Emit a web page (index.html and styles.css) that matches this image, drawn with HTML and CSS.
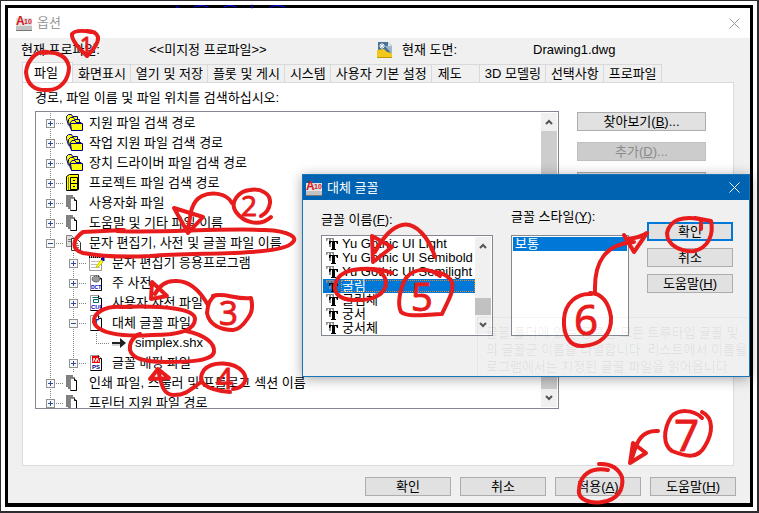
FILE: index.html
```html
<!DOCTYPE html>
<html lang="ko">
<head>
    <meta charset="utf-8">
    <meta name="viewport" content="width=device-width, initial-scale=1">
    <title>옵션</title>
    <link rel="stylesheet" href="styles.css">
</head>
<body>

<!-- Shared icons -->
<svg class="defs" width="0" height="0">
    <symbol id="folders" viewBox="0 0 18 18">
        <g fill="#ff0" stroke="#000080">
            <path d="M2.500 11.500l-2-7V2.500l2-2h3l1 2h5v4"/>
            <path d="M4.500 14.500l-2-7v-2l2-2h3l1 2h5v4"/>
            <path d="M5.500 16.500l-1-6v-2l1.500-2h3l1 2h5v2"/>
            <path d="M4.500 9.500h12v7h-11z"/>
        </g>
    </symbol>
    <symbol id="cabinet" viewBox="0 0 18 18">
        <path d="M.5 2.500l3-2h9v15l-2 1h-10z" fill="#ff0" stroke="#000"/>
        <path d="M4.500 3.500h7v12h-7zM4.500 9.500h7M7 6.500h2M7 12.500h2" fill="#ff0" stroke="#000"/>
        <path d="M2.500 3v13" stroke="#880"/>
    </symbol>
    <symbol id="papers" viewBox="0 0 18 18">
        <path d="M0 1h7v2H2v10H0zM2 3h7v2H4v10H2z" fill="#808080"/>
        <path d="M4.500 4.500h4l2 2v10h-6z" fill="#fff" stroke="#888"/>
        <path d="M8.500 4.500v2h2v10h-6" fill="none" stroke="#000"/>
    </symbol>
    <symbol id="docs" viewBox="0 0 18 18">
        <path d="M.5 1.500h5l2 2v9h-7z" fill="#ddd" stroke="#808080"/>
        <path d="M5.500 4.500h5l4 4v8h-9z" fill="#fff" stroke="#333"/>
        <path d="M7 9.500h5M7 11.500h6M7 13.500h6M2 5.500h3M2 7.500h3" stroke="#777"/>
    </symbol>
    <symbol id="note" viewBox="0 0 18 18">
        <path d="M.5 3.500h12v13h-12z" fill="#fff" stroke="#999"/>
        <path d="M2 7.500h9M2 10.500h8M2 13.500h9" stroke="#bbb"/>
        <path d="M0 2.500h12" stroke="#000" stroke-width="3" stroke-dasharray="1 1"/>
        <path d="M7 13l5-7 2 2-5 5z" fill="#ff0" stroke="#cc0"/>
        <path d="M12 5l3-3v5z" fill="#00c" stroke="#000080"/>
    </symbol>
    <symbol id="page" viewBox="0 0 18 18">
        <path d="M1.500 1.500h8l3 3v12h-11z" fill="#fff" stroke="#999"/>
        <path d="M9.500 1.500v3h3v12h-11" fill="none" stroke="#000"/>
    </symbol>
    <symbol id="truetype" viewBox="0 0 14 14">
        <path d="M1 1h8v3H8L7 2H6v8H4V2H3L2 4H1z" fill="#8a8a8a"/>
        <path d="M4 4h9v3h-1l-1-2h-1v7h1v1H6v-1h1V5H6L5 7H4z" fill="#000"/>
    </symbol>
    <symbol id="up" viewBox="0 0 8 6"><path d="M1 5l3-3 3 3" fill="none" stroke="#555" stroke-width="2"/></symbol>
    <symbol id="down" viewBox="0 0 8 6"><path d="M1 1l3 3 3-3" fill="none" stroke="#555" stroke-width="2"/></symbol>
    <symbol id="close" viewBox="0 0 11 11"><path d="M.5.5l10 10M10.500.5l-10 10" fill="none" stroke="currentColor"/></symbol>
</svg>

<div class="frame">
    <main class="window">
        <header class="titlebar">
            <svg class="app-icon" viewBox="0 0 16 16">
                <path d="M0 3h16v12H0z" fill="#e4e4e4"/>
                <path d="M0 11h16v4H0z" fill="#c2c2c2"/>
                <path d="M0 15.500h16" stroke="#777"/>
                <text x="0" y="10" font-size="12">A</text>
                <text x="8" y="9" font-size="7">10</text>
            </svg>
            <h1>옵션</h1>
            <button class="close" aria-label="닫기"><svg><use href="#close"/></svg></button>
        </header>

        <div class="profile">
            <span>현재 프로파일:</span>
            <span>&lt;&lt;미지정 프로파일&gt;&gt;</span>
            <svg class="drawing-icon" viewBox="0 0 16 18">
                <path d="M1 1h10l4 4v12H1z" fill="#4a7396"/>
                <path d="M8 5h7v8z" fill="#9fb7c9"/>
                <path d="M11 1v4h4z" fill="#dce6ee"/>
                <path d="M5 2v6M2 5h6M3 3l4 4M7 3l-4 4" stroke="#fff"/>
                <path d="M0 9l7-1 3 3 5 1v5H0z" fill="#f3c81c"/>
                <path d="M0 16.500h15" stroke="#c79500"/>
            </svg>
            <span>현재 도면:</span>
            <span>Drawing1.dwg</span>
        </div>

        <nav class="tabs" role="tablist">
            <button class="tab active" role="tab" aria-selected="true">파일</button>
            <button class="tab" role="tab">화면표시</button>
            <button class="tab" role="tab">열기 및 저장</button>
            <button class="tab" role="tab">플롯 및 게시</button>
            <button class="tab" role="tab">시스템</button>
            <button class="tab" role="tab">사용자 기본 설정</button>
            <button class="tab wide" role="tab">제도</button>
            <button class="tab" role="tab">3D 모델링</button>
            <button class="tab" role="tab">선택사항</button>
            <button class="tab" role="tab">프로파일</button>
        </nav>

        <section class="panel" role="tabpanel">
            <p class="caption" id="paths">경로, 파일 이름 및 파일 위치를 검색하십시오:</p>
            <div class="columns">
                <div class="treebox">
                    <ul class="tree" aria-labelledby="paths">
                        <li><div class="row"><button class="toggle plus" aria-label="확장"></button><svg class="icon"><use href="#folders"/></svg>지원 파일 검색 경로</div></li>
                        <li><div class="row"><button class="toggle plus" aria-label="확장"></button><svg class="icon"><use href="#folders"/></svg>작업 지원 파일 검색 경로</div></li>
                        <li><div class="row"><button class="toggle plus" aria-label="확장"></button><svg class="icon"><use href="#folders"/></svg>장치 드라이버 파일 검색 경로</div></li>
                        <li><div class="row"><button class="toggle plus" aria-label="확장"></button><svg class="icon"><use href="#cabinet"/></svg>프로젝트 파일 검색 경로</div></li>
                        <li><div class="row"><button class="toggle plus" aria-label="확장"></button><svg class="icon"><use href="#papers"/></svg>사용자화 파일</div></li>
                        <li><div class="row"><button class="toggle plus" aria-label="확장"></button><svg class="icon"><use href="#papers"/></svg>도움말 및 기타 파일 이름</div></li>
                        <li>
                            <div class="row"><button class="toggle" aria-label="축소"></button><svg class="icon"><use href="#docs"/></svg>문자 편집기, 사전 및 글꼴 파일 이름</div>
                            <ul class="branch">
                                <li><div class="row"><button class="toggle plus" aria-label="확장"></button><svg class="icon"><use href="#note"/></svg>문자 편집기 응용프로그램</div></li>
                                <li><div class="row"><button class="toggle plus" aria-label="확장"></button><svg class="icon" viewBox="0 0 18 18">
                                    <use href="#page"/><ellipse cx="7" cy="5" rx="4" ry="3" fill="#999" stroke="#222" stroke-dasharray="1 1"/>
                                    <text x="2" y="15" font-size="5" font-weight="bold" fill="#00c">DCT</text></svg>주 사전</div></li>
                                <li><div class="row"><button class="toggle plus" aria-label="확장"></button><svg class="icon" viewBox="0 0 18 18">
                                    <use href="#page"/><path d="M3.500 3.500h6M4.500 5.500h5v3h-5z" fill="#fff" stroke="#066"/>
                                    <text x="2" y="15" font-size="6" font-weight="bold" fill="#00c">CUI</text></svg>사용자 사전 파일</div></li>
                                <li>
                                    <div class="row"><button class="toggle" aria-label="축소"></button><svg class="icon" viewBox="0 0 18 18">
                                        <use href="#page"/><text x="4" y="13" font-size="10" font-weight="bold" fill="#22c">T</text></svg>대체 글꼴 파일</div>
                                    <div class="row leaf"><svg class="arrow" viewBox="0 0 15 10"><path d="M0 4h8V0l6 5-6 5V6H0z" fill="#222"/><path d="M0 7h8" stroke="#aaa"/></svg>simplex.shx</div>
                                </li>
                                <li><div class="row"><button class="toggle plus" aria-label="확장"></button><svg class="icon" viewBox="0 0 18 18">
                                    <use href="#page"/><path d="M3 2h6l2 3v4H3z" fill="#e00"/><path d="M4 8l1-4 2 4 1-4 2 4" fill="none" stroke="#fff"/>
                                    <text x="3" y="15" font-size="6" font-weight="bold" fill="#008">PS</text></svg>글꼴 매핑 파일</div></li>
                            </ul>
                        </li>
                        <li><div class="row"><button class="toggle plus" aria-label="확장"></button><svg class="icon"><use href="#papers"/></svg>인쇄 파일, 스풀러 및 프롤로그 섹션 이름</div></li>
                        <li><div class="row"><button class="toggle plus" aria-label="확장"></button><svg class="icon"><use href="#papers"/></svg>프린터 지원 파일 경로</div></li>
                    </ul>
                    <div class="scroll">
                        <svg><use href="#up"/></svg>
                        <div class="thumb long"></div>
                        <svg><use href="#down"/></svg>
                    </div>
                </div>
                <div class="side">
                    <button class="btn">찾아보기(<u>B</u>)...</button>
                    <button class="btn" disabled>추가(<u>D</u>)...</button>
                    <button class="btn" aria-label="제거"></button>
                </div>
            </div>
        </section>

        <footer class="actions">
            <button class="btn">확인</button>
            <button class="btn">취소</button>
            <button class="btn">적용(<u>A</u>)</button>
            <button class="btn">도움말(<u>H</u>)</button>
        </footer>
    </main>
</div>

<div class="dialog" role="dialog" aria-labelledby="dialog-title">
    <header class="dialog-title">
        <svg class="app-icon" viewBox="0 0 16 16">
            <path d="M0 3h16v12H0z" fill="#e4e4e4"/>
            <path d="M0 11h16v4H0z" fill="#c2c2c2"/>
            <path d="M0 15.500h16" stroke="#777"/>
            <text x="0" y="10" font-size="12">A</text>
            <text x="8" y="9" font-size="7">10</text>
        </svg>
        <h2 id="dialog-title">대체 글꼴</h2>
        <button class="close" aria-label="닫기"><svg><use href="#close"/></svg></button>
    </header>
    <div class="dialog-body">
        <div class="field names">
            <span id="font-name">글꼴 이름(<u>F</u>):</span>
            <div class="listbox">
                <ul role="listbox" aria-labelledby="font-name">
                    <li role="option"><svg><use href="#truetype"/></svg><span>Yu Gothic UI Light</span></li>
                    <li role="option"><svg><use href="#truetype"/></svg><span>Yu Gothic UI Semibold</span></li>
                    <li role="option"><svg><use href="#truetype"/></svg><span>Yu Gothic UI Semilight</span></li>
                    <li role="option" class="selected" aria-selected="true"><svg><use href="#truetype"/></svg><span>굴림</span></li>
                    <li role="option"><svg><use href="#truetype"/></svg><span>굴림체</span></li>
                    <li role="option"><svg><use href="#truetype"/></svg><span>궁서</span></li>
                    <li role="option"><svg><use href="#truetype"/></svg><span>궁서체</span></li>
                </ul>
                <div class="scroll">
                    <svg><use href="#up"/></svg>
                    <div class="thumb short"></div>
                    <svg><use href="#down"/></svg>
                </div>
            </div>
        </div>
        <div class="field styles">
            <span id="font-style">글꼴 스타일(<u>Y</u>):</span>
            <div class="listbox">
                <ul role="listbox" aria-labelledby="font-style">
                    <li role="option" class="selected" aria-selected="true">보통</li>
                </ul>
            </div>
        </div>
        <div class="dialog-actions">
            <button class="btn default">확인</button>
            <button class="btn">취소</button>
            <button class="btn">도움말(<u>H</u>)</button>
        </div>
    </div>
    <!-- Tooltip fading out -->
    <div class="tooltip">
        글꼴 폴더에 있는 등록된 모든 트루타입 글꼴 및<br>
        의 글꼴군 이름을 나열합니다. 리스트에서 이름을<br>
        로그램에서는 지정된 글꼴 파일을 읽어옵니다.
    </div>
</div>

<!-- Red pen marks for steps 1 to 7 -->
<svg class="ink" viewBox="0 0 759 513">
    <path class="blue" d="M176 7h3M194 7q7-3 14 0M224 7q6-3 12 0M252 5v3M270 7q7-3 15 0"/>

    <path d="M91 32Q76 29 72 34Q71 41 87 56Q99 44 98 37Q96 31 87 31"/>
    <path d="M48 52C34 50 27 63 26 72C27 85 35 91 48 90C61 90 69 79 69 67C67 56 57 51 43 53"/>

    <path d="M271 217C260 227 244 223 236 212C229 202 239 191 250 190C261 188 271 194 270 203C269 211 265 214 261 216"/>
    <path d="M232 203C226 192 210 192 202 196C190 202 190 217 188 233L174 208L203 217L188 233"/>
    <path d="M117 231C160 233 220 228 265 230C290 231 299 238 292 243C280 256 200 252 150 256Q110 258 83 253C70 249 73 239 83 232L124 230"/>

    <path d="M213 296C224 292 236 300 251 298C253 306 252 313 248 318Q240 330 233 330C221 330 209 325 207 313Q208 299 216 295"/>
    <path d="M208 305C198 287 186 280 174 281Q162 281 155 294M152 282L167 296L151 299Z"/>
    <path d="M124 307C105 305 93 313 94 322C97 333 120 337 152 335C181 335 195 330 195 319C195 309 165 305 119 307"/>

    <path d="M186 331C205 335 215 343 214 352C212 361 190 362 165 362C145 362 132 358 130 350C129 342 134 336 140 334"/>
    <path d="M233 389C243 388 249 380 243 372C234 361 212 361 204 370C196 382 205 390 230 392"/>
    <path d="M201 382C190 390 186 395 174 395C162 395 161 382 158 369L169 378L150 379L158 369"/>

    <path d="M440 276C430 268 415 267 406 278C400 288 397 304 401 312C408 318 428 314 442 314C447 302 456 290 451 280Q444 272 434 272"/>
    <path d="M435 257C429 238 416 222 402 225Q388 228 375 252M372 236L392 247L373 262Z"/>
    <path d="M392 273C375 267 344 266 337 280C331 291 338 300 354 300C374 301 386 294 386 282C385 274 378 269 366 269"/>

    <path d="M591 294C577 293 565 303 564 319C563 336 570 347 583 346C600 345 612 335 611 317C609 303 602 293 590 293"/>
    <path d="M595 292C594 263 604 244 634 242M624 235L634 252L647 233Q640 238 626 239"/>
    <path d="M699 219C684 216 670 219 667 233C667 246 682 252 694 251C708 248 714 235 711 221L695 218M701 221V229"/>

    <path d="M702 418C693 409 678 409 671 417C663 430 663 445 672 451C687 457 698 459 705 446C713 433 714 418 702 412"/>
    <path d="M658 431C642 430 637 441 633 455L630 463L633 443L646 453L630 463"/>
    <path d="M608 470C592 467 580 474 579 489C577 500 591 504 602 502C618 500 624 489 622 477Q616 463 599 464"/>

    <g class="digits">
        <text x="80" y="53" font-size="22">1</text>
        <text x="241" y="216" font-size="28">2</text>
        <text x="219" y="325" font-size="33">3</text>
        <text x="216" y="389" font-size="30">4</text>
        <text x="411" y="311" font-size="38">5</text>
        <text x="574" y="335" font-size="42">6</text>
        <text x="674" y="451" font-size="44">7</text>
    </g>
</svg>

</body>
</html>
```

FILE: styles.css
```css
* {
    box-sizing: border-box;
}
body {
    margin: 0;
    background: #2e2c30;
    color: #000;
    font: 13px/16px "Liberation Sans", "Noto Sans CJK KR", sans-serif;
}
h1, h2, p, ul {
    margin: 0;
    padding: 0;
    font-size: 13px;
    font-weight: normal;
    list-style: none;
}
button {
    padding: 0;
    border: 0;
    background: none;
    color: inherit;
    font: inherit;
}
.defs {
    position: absolute;
}
.frame {
    padding: 1px 2px 1px 1px;
}
.window {
    border: 3px solid #000;
    border-bottom-width: 4px;
    outline: 4px solid #fff;
    margin: 4px;
    background: #f0f0f0;
}

/* Title bars */
.titlebar, .dialog-title {
    display: flex;
    align-items: center;
    gap: 5px;
}
.titlebar {
    height: 30px;
    padding: 0 10px 0 8px;
    background: #fff;
    color: #999;
}
.app-icon {
    width: 16px;
    height: 16px;
    fill: #d8151c;
    font-weight: bold;
}
.close {
    display: flex;
    margin-left: auto;
}
.close svg {
    width: 11px;
    height: 11px;
}

.profile {
    display: grid;
    grid-template-columns: 128fr 228fr 25px 131fr 217fr;
    align-items: center;
    height: 24px;
    padding-left: 13px;
}
.drawing-icon {
    width: 16px;
    height: 18px;
}

/* Tabs */
.tabs {
    display: flex;
    align-items: flex-end;
    padding-left: 14px;
}
.tab {
    height: 18px;
    padding: 0 4px 0 5px;
    border: 1px solid #d9d9d9;
    border-width: 1px 1px 0 0;
    white-space: nowrap;
}
.tab.active {
    height: 20px;
    width: 51px;
    padding-right: 8px;
    border-left-width: 1px;
    background: #fff;
}
.tab.wide {
    width: 48px;
    padding-right: 16px;
}
.panel {
    height: 384px;
    margin: 0 16px 0 14px;
    padding: 7px 27px 0 12px;
    border: 1px solid #dcdcdc;
    border-top-color: #d9d9d9;
    background: #fff;
}
.caption {
    margin-bottom: 5px;
}
.columns {
    display: flex;
    gap: 18px;
}
.treebox {
    flex: 1;
    display: flex;
    height: 298px;
    padding: 1px;
    border: 1px solid #828790;
    overflow: hidden;
}

/* Tree */
.tree, .branch {
    background: linear-gradient(#808080 1px, transparent 1px) 13px 0 / 1px 2px repeat-y;
}
.tree {
    flex: 1;
    padding-left: 9px;
}
.branch {
    margin-left: 23px;
    background-position: 4px 0;
}
.row {
    display: flex;
    align-items: center;
    height: 20px;
    white-space: nowrap;
}
.toggle {
    width: 9px;
    height: 9px;
    border: 1px solid #919191;
    background: linear-gradient(#2b4f96, #2b4f96) 1px 3px / 5px 1px no-repeat, #f8f8f8;
}
.toggle.plus {
    background: linear-gradient(#2b4f96, #2b4f96) 1px 3px / 5px 1px no-repeat,
                linear-gradient(#2b4f96, #2b4f96) 3px 1px / 1px 5px no-repeat, #f8f8f8;
}
.icon {
    width: 29px;
    height: 18px;
    padding-left: 11px;
    margin-right: 5px;
    background: repeating-linear-gradient(90deg, #808080 0 1px, transparent 1px 2px) 1px 9px / 8px 1px no-repeat;
}
.leaf {
    padding-left: 27px;
    background: repeating-linear-gradient(#808080 0 1px, transparent 1px 2px) 27px 0 / 1px 10px no-repeat,
                repeating-linear-gradient(90deg, #808080 0 1px, transparent 1px 2px) 27px 10px / 13px 1px no-repeat;
}
.arrow {
    width: 15px;
    height: 10px;
    margin: 0 8px 0 16px;
}

/* Scroll bars */
.scroll {
    flex: none;
    display: flex;
    flex-direction: column;
    align-items: center;
    justify-content: space-between;
    width: 16px;
    background: #f0f0f0;
}
.scroll svg {
    flex: none;
    width: 8px;
    height: 6px;
    margin: 6px 0;
}
.thumb {
    width: 16px;
    background: #cdcdcd;
}
.thumb.long {
    flex: 1;
}
.thumb.short {
    height: 17px;
    margin-top: 42px;
    background: #c1c1c1;
}

/* Buttons */
.btn {
    height: 19px;
    border: 1px solid #adadad;
    background: #e1e1e1;
    line-height: 16px;
}
.btn:disabled {
    border-color: #bfbfbf;
    background: #ccc;
    color: #8b8b8b;
}
.btn.default {
    border: 2px solid #0078d7;
    line-height: 14px;
}
.side {
    display: flex;
    flex-direction: column;
    gap: 11px;
    width: 129px;
    padding-top: 1px;
}
.actions {
    display: flex;
    justify-content: flex-end;
    gap: 9px;
    padding: 11px 14px 7px;
}
.actions .btn {
    width: 86px;
}

/* Dialog over the options window */
.dialog {
    position: absolute;
    top: 174px;
    left: 302px;
    width: 448px;
    height: 203px;
    border: 1px solid #1874b8;
    background: #f0f0f0;
    box-shadow: 0 2px 12px rgba(0, 0, 0, .35);
}
.dialog-title {
    height: 25px;
    padding: 0 9px 0 3px;
    background: #0063b1;
    color: #fff;
}
.dialog-body {
    display: flex;
    padding: 9px 16px 0 18px;
}
.field {
    display: flex;
    flex-direction: column;
}
.names {
    flex: 172;
    margin-right: 18px;
    padding-top: 3px;
    gap: 7px;
}
.styles {
    flex: 118;
    margin-right: 18px;
    gap: 10px;
}
.listbox {
    display: flex;
    height: 101px;
    padding: 1px;
    border: 1px solid #828790;
    background: #fff;
}
.listbox ul {
    flex: 1;
}
.listbox li {
    display: flex;
    align-items: center;
    gap: 2px;
    height: 14px;
    padding-left: 2px;
    line-height: 12px;
    white-space: nowrap;
}
.listbox li svg {
    width: 14px;
    height: 14px;
}
.listbox li span {
    flex: 1;
    padding-left: 1px;
}
.listbox .selected {
    background: #0078d7;
    color: #fff;
}
.selected span {
    outline: 1px dotted #e08a30;
    outline-offset: -1px;
}
.dialog-actions {
    display: flex;
    flex-direction: column;
    gap: 7px;
    width: 86px;
    padding-top: 13px;
}
.tooltip {
    position: absolute;
    top: 142px;
    left: 174px;
    right: 0;
    height: 59px;
    padding: 6px 0 0 8px;
    border: 1px solid rgba(0, 0, 0, .04);
    border-width: 1px 0 0 1px;
    color: rgba(0, 0, 0, .08);
    line-height: 17px;
    white-space: nowrap;
}

/* Pen marks */
.ink {
    position: absolute;
    top: 0;
    left: 0;
    width: 759px;
    height: 513px;
    pointer-events: none;
}
.ink path {
    fill: none;
    stroke: #e81c1c;
    stroke-width: 4;
    stroke-linecap: round;
    stroke-linejoin: round;
}
.ink .blue {
    stroke: #00f;
    stroke-width: 1;
}
.digits {
    fill: #e81c1c;
    stroke: #e81c1c;
    stroke-width: 1;
    font-family: "Open Sans", sans-serif;
}
```
